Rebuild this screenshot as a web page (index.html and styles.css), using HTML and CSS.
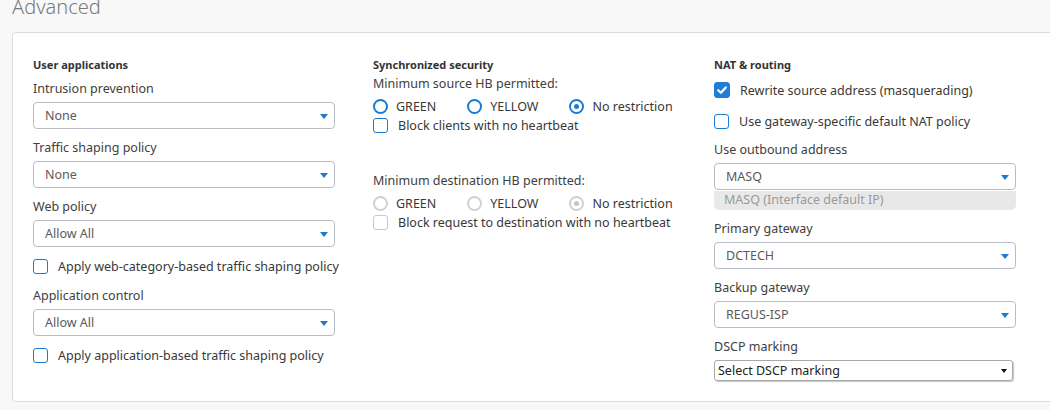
FILE: index.html
```html
<!DOCTYPE html>
<html lang="en">

<head>
    <meta charset="UTF-8">
    <title>Advanced</title>
    <link rel="stylesheet" href="styles.css">
</head>

<body>
    <div class="title">Advanced</div>

    <div class="card">
        <!-- user applications -->
        <div class="col apps">
            <div class="heading">User applications</div>

            <div class="field">
                <div class="label">Intrusion prevention</div>
                <div class="select"><span>None</span><i class="caret"></i></div>
            </div>
            <div class="field">
                <div class="label">Traffic shaping policy</div>
                <div class="select"><span>None</span><i class="caret"></i></div>
            </div>
            <div class="field">
                <div class="label">Web policy</div>
                <div class="select"><span>Allow All</span><i class="caret"></i></div>
            </div>
            <label class="check"><span class="box"></span>Apply web-category-based traffic shaping policy</label>
            <div class="field">
                <div class="label">Application control</div>
                <div class="select"><span>Allow All</span><i class="caret"></i></div>
            </div>
            <label class="check"><span class="box"></span>Apply application-based traffic shaping policy</label>
        </div>

        <!-- synchronized security -->
        <div class="col sync">
            <div class="heading">Synchronized security</div>

            <div class="sub">Minimum source HB permitted:</div>
            <div class="radios">
                <label class="radio"><span class="dot"></span>GREEN</label>
                <label class="radio"><span class="dot"></span>YELLOW</label>
                <label class="radio on"><span class="dot"></span>No restriction</label>
            </div>
            <label class="check tight"><span class="box"></span>Block clients with no heartbeat</label>

            <div class="sub spaced">Minimum destination HB permitted:</div>
            <div class="radios off">
                <label class="radio"><span class="dot"></span>GREEN</label>
                <label class="radio"><span class="dot"></span>YELLOW</label>
                <label class="radio on"><span class="dot"></span>No restriction</label>
            </div>
            <label class="check tight off"><span class="box"></span>Block request to destination with no heartbeat</label>
        </div>

        <!-- nat & routing -->
        <div class="col nat">
            <div class="heading">NAT &amp; routing</div>

            <label class="check first"><span class="box checked">
                <svg width="12" height="12" viewBox="0 0 12 12"><path d="M2.2 6.2 L4.9 8.8 L9.8 3.4" fill="none" stroke="#fff" stroke-width="2.2" stroke-linecap="round" stroke-linejoin="round"/></svg>
            </span>Rewrite source address (masquerading)</label>
            <label class="check second"><span class="box"></span>Use gateway-specific default NAT policy</label>

            <div class="field">
                <div class="label">Use outbound address</div>
                <div class="select"><span>MASQ</span><i class="caret"></i></div>
                <div class="hint">MASQ (Interface default IP)</div>
            </div>
            <div class="field">
                <div class="label">Primary gateway</div>
                <div class="select"><span>DCTECH</span><i class="caret"></i></div>
            </div>
            <div class="field">
                <div class="label">Backup gateway</div>
                <div class="select"><span>REGUS-ISP</span><i class="caret"></i></div>
            </div>
            <div class="field">
                <div class="label">DSCP marking</div>
                <div class="native"><span>Select DSCP marking</span><i class="caret dark"></i></div>
            </div>
        </div>
    </div>
</body>

</html>
```

FILE: styles.css
```css
* {
    margin: 0;
    padding: 0;
    box-sizing: border-box;
}

body {
    background: #f8f8f8;
    font-family: "Noto Sans", "Open Sans", sans-serif;
    font-size: 12.5px;
    color: #383838;
    overflow: hidden;
    height: 410px;
}

.title {
    font-size: 20px;
    font-weight: 300;
    color: #7a7a7a;
    line-height: 20px;
    height: 30px;
    padding-left: 12px;
    margin-top: -3px;
}

.card {
    background: #fff;
    border: 1px solid #dcdcdc;
    border-radius: 4px;
    margin-left: 12px;
    margin-top: 5px;
    width: 1100px;
    height: 370px;
    padding: 25px 20px;
    display: grid;
    grid-template-columns: 302px 303px 302px;
    column-gap: 38px;
    align-items: start;
}

.heading {
    font-size: 11px;
    font-weight: bold;
    line-height: 14px;
    color: #333;
}

.label,
.sub {
    line-height: 18px;
    color: #404040;
    white-space: nowrap;
}

.field {
    margin-bottom: 10px;
}

.field .label {
    margin-bottom: 4px;
}

.apps .heading {
    margin-bottom: 8px;
}

.apps .check {
    margin-top: 1px;
}

/* selects */
.select {
    position: relative;
    height: 27px;
    border: 1px solid #b9bdc3;
    border-radius: 4px;
    background: #fff;
    padding-left: 11px;
    line-height: 25px;
    color: #5a5a5a;
}

.caret {
    position: absolute;
    right: 6px;
    top: 11px;
    width: 0;
    height: 0;
    border-left: 4.5px solid transparent;
    border-right: 4.5px solid transparent;
    border-top: 5px solid #1a7bd0;
}

.hint {
    height: 19px;
    margin-top: 1px;
    background: #e8e8e8;
    border-radius: 0 0 5px 5px;
    color: #9a9a9a;
    padding-left: 10px;
    line-height: 18px;
}

.native {
    position: relative;
    width: 299px;
    height: 21px;
    border: 1px solid #a8a8a8;
    border-radius: 3px;
    box-shadow: 1px 1px 1px #c4c4c4;
    padding-left: 3px;
    line-height: 19px;
    color: #222;
}

.caret.dark {
    border-top-color: #111;
    border-left-width: 3.5px;
    border-right-width: 3.5px;
    border-top-width: 4px;
    right: 5px;
    top: 8px;
}

/* checkboxes */
.check {
    display: flex;
    align-items: center;
    height: 18px;
    margin-bottom: 12px;
    white-space: nowrap;
    color: #383838;
}

.box {
    width: 15px;
    height: 15px;
    border: 1.5px solid #1a7bd0;
    border-radius: 3px;
    margin-right: 10px;
    flex-shrink: 0;
    display: flex;
    align-items: center;
    justify-content: center;
}

.box.checked {
    width: 16px;
    height: 16px;
    background: #1f7fd4;
    border-color: #1f7fd4;
}

.check.tight {
    margin-bottom: 0;
}

.check.off .box {
    border-color: #c8c8c8;
}

/* synchronized security */
.sync .heading {
    margin-bottom: 3px;
}

.sub.spaced {
    margin-top: 38px;
}

.radios {
    display: flex;
    height: 20px;
    align-items: center;
    margin-top: 3px;
    white-space: nowrap;
}

.radio {
    display: flex;
    align-items: center;
    margin-right: 31px;
    color: #383838;
}

.dot {
    width: 15px;
    height: 15px;
    border: 2px solid #1a7bd0;
    border-radius: 50%;
    margin-right: 8px;
    flex-shrink: 0;
    display: flex;
    align-items: center;
    justify-content: center;
}

.radio.on .dot::after {
    content: "";
    width: 5px;
    height: 5px;
    border-radius: 50%;
    background: #1a7bd0;
}

.radios.off .dot {
    border-color: #d0d0d0;
}

.radios.off .radio.on .dot::after {
    background: #c4c4c4;
}

/* nat & routing */
.check.first {
    margin-top: 9px;
    margin-bottom: 13px;
}

.check.second {
    margin-bottom: 11px;
}
```
